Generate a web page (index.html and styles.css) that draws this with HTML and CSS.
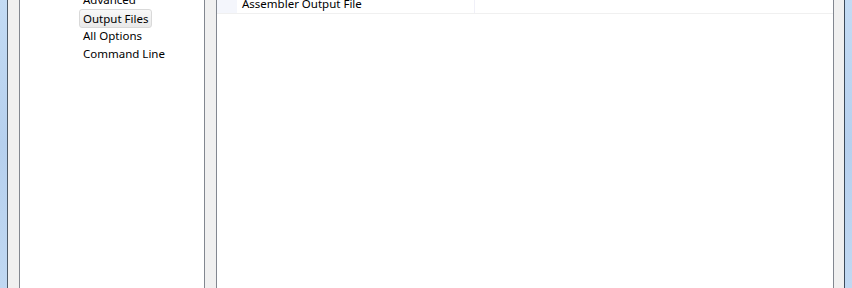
FILE: index.html
```html
<!DOCTYPE html>
<html lang="en">

<head>
    <meta charset="UTF-8">
    <meta name="viewport" content="width=device-width, initial-scale=1.0">
    <title>Properties</title>
    <link rel="stylesheet" href="styles.css">
</head>

<body>
    <div id="dialog">
        <div class="frame frame-left"></div>

        <div class="dialog-body">
            <!-- stablo kategorija -->
            <div class="tree-panel">
                <ul class="tree-list">
                    <li class="tree-item">Advanced</li>
                    <li class="tree-item selected"><span>Output Files</span></li>
                    <li class="tree-item">All Options</li>
                    <li class="tree-item">Command Line</li>
                </ul>
            </div>

            <!-- tabela svojstava -->
            <div class="grid-panel">
                <div class="grid-row">
                    <div class="grid-margin"></div>
                    <div class="grid-name">Assembler Output File</div>
                    <div class="grid-value"></div>
                </div>
            </div>
        </div>

        <div class="frame frame-right"></div>
    </div>
</body>

</html>
```

FILE: styles.css
```css
html,
body {
    margin: 0;
    padding: 0;
    height: 100%;
    overflow: hidden;
}

body {
    font-family: "Noto Sans", "Open Sans", sans-serif;
    font-size: 11.5px;
    color: #000;
    background: #f0f0f0;
}

#dialog {
    display: flex;
    height: 288px;
}

/* Aero okvir prozora */
.frame {
    width: 7px;
    background: linear-gradient(#c3dbf4, #b6d0ee 50%, #c0d8f2);
}

.frame-left {
    border-right: 1px solid #4d5a68;
}

.frame-right {
    border-left: 1px solid #3c4a5a;
}

.dialog-body {
    flex: 1;
    display: flex;
    gap: 11px;
    padding: 0 10px 0 11px;
    background: #f0f0f0;
}

/* levi panel - stablo */
.tree-panel {
    width: 184px;
    background: #fff;
    border-left: 1px solid #828790;
    border-right: 1px solid #828790;
    overflow: hidden;
}

.tree-list {
    list-style: none;
    margin: -9px 0 0 0;
    padding: 0 0 0 59px;
}

.tree-item {
    height: 18px;
    line-height: 18px;
    padding-left: 4px;
    white-space: nowrap;
}

.tree-item.selected {
    padding-left: 0;
}

.tree-item.selected span {
    display: inline-block;
    height: 17px;
    line-height: 17px;
    padding: 0 3px;
    border: 1px solid #d9d9d9;
    border-radius: 3px;
    background: linear-gradient(#f8f8f8, #e9e9e9);
}

/* desni panel - svojstva */
.grid-panel {
    flex: 1;
    background: #fff;
    border-left: 1px solid #828790;
    border-right: 1px solid #828790;
    overflow: hidden;
}

.grid-row {
    display: flex;
    height: 18px;
    margin-top: -5px;
    border-bottom: 1px solid #f0f0f0;
}

.grid-margin {
    width: 20px;
    background: #f4f6fc;
}

.grid-name {
    width: 232px;
    padding-left: 5px;
    line-height: 18px;
    border-right: 1px solid #f0f0f8;
    white-space: nowrap;
}

.grid-value {
    flex: 1;
}
```
